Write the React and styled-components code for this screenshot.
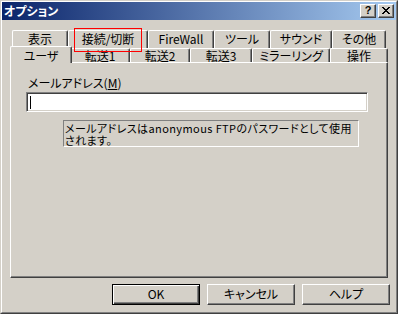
import React from "react";
import styled, { createGlobalStyle, css } from "styled-components";

const FACE = "#d4d0c8";
const SHADOW = "#808080";
const DARK = "#404040";

const Global = createGlobalStyle`
  html, body { margin: 0; padding: 0; background: ${FACE}; }
  body {
    font-family: "Noto Sans CJK JP", "Noto Sans", sans-serif;
    font-size: 12px;
    color: #000;
  }
  * { box-sizing: border-box; }
`;

const Window = styled.div`
  position: relative;
  width: 398px;
  height: 314px;
  background: ${FACE};
  border: 1px solid;
  border-color: ${FACE} ${DARK} ${DARK} ${FACE};
  display: flex;
  flex-direction: column;
  font-feature-settings: "palt" 1;
`;

const Frame = styled.div`
  flex: 1;
  display: flex;
  flex-direction: column;
  border: 1px solid;
  border-color: #fff ${SHADOW} ${SHADOW} #fff;
`;

const TitleBar = styled.div`
  height: 18px;
  flex: none;
  display: flex;
  align-items: center;
  padding: 0 2px 0 2px;
  background: linear-gradient(to right, #0a246a, #a6caf0);
`;

const Title = styled.span`
  flex: 1;
  color: #fff;
  font-weight: bold;
  font-size: 12px;
  line-height: 16px;
`;

const CapButton = styled.div`
  width: 16px;
  height: 14px;
  margin-left: ${(p) => p.$gap || 0}px;
  background: ${FACE};
  border: 1px solid;
  border-color: #fff ${DARK} ${DARK} #fff;
  box-shadow: inset -1px -1px ${SHADOW};
  display: flex;
  align-items: center;
  justify-content: center;
  font-family: "Liberation Sans", sans-serif;
  font-weight: bold;
  font-size: 11px;
  line-height: 11px;
  padding-bottom: 1px;
`;

const Body = styled.div`
  flex: 1;
  display: flex;
  flex-direction: column;
  padding: 10px 6px 0 8px;
`;

const TabStrip = styled.div`
  position: relative;
  z-index: 1;
  display: flex;
  flex-direction: column;
  padding-left: 2px;
`;

const TabRow = styled.div`
  display: flex;
  height: ${(p) => p.$h}px;
`;

const Tab = styled.div`
  position: relative;
  flex: none;
  width: ${(p) => p.$w}px;
  height: 100%;
  background: ${FACE};
  border-top: 1px solid #fff;
  border-left: 1px solid #fff;
  border-right: 1px solid ${DARK};
  box-shadow: inset -1px 0 ${SHADOW};
  border-radius: 2px 2px 0 0;
  text-align: center;
  white-space: nowrap;
  line-height: ${(p) => p.$lh}px;
  ${(p) =>
    p.$active &&
    css`
      margin: -2px -2px 0;
      width: ${p.$w + 4}px;
      height: calc(100% + 3px);
      z-index: 2;
    `}
`;

const Panel = styled.div`
  height: 216px;
  flex: none;
  margin-right: 2px;
  border: 1px solid;
  border-color: #fff ${DARK} ${DARK} #fff;
  box-shadow: inset -1px -1px ${SHADOW};
  padding: 12px 0 0 15px;
  display: flex;
  flex-direction: column;
  align-items: flex-start;
`;

const Label = styled.div`
  margin-left: 2px;
  line-height: 16px;
  white-space: nowrap;
`;

const Key = styled.span`
  text-decoration: underline;
`;

const Field = styled.div`
  width: 342px;
  height: 20px;
  margin-top: 1px;
  background: #fff;
  border: 1px solid;
  border-color: ${SHADOW} #fff #fff ${SHADOW};
  box-shadow: inset 1px 1px ${DARK}, inset -1px -1px ${FACE};
  padding: 2px 0 0 2px;
`;

const Caret = styled.div`
  width: 1px;
  height: 13px;
  margin: 1px 0 0 1px;
  background: #000;
`;

const Note = styled.div`
  width: 296px;
  height: 27px;
  margin: 8px 0 0 37px;
  border: 1px solid;
  border-color: ${SHADOW} #fff #fff ${SHADOW};
  font-size: 11px;
  letter-spacing: 0.4px;
  line-height: 12px;
  padding: 1px 0 0 1px;
  white-space: nowrap;
`;

const NoteLine = styled.div`
  height: 12px;
`;

const ButtonRow = styled.div`
  display: flex;
  justify-content: flex-end;
  gap: 7px;
  margin-top: 6px;
`;

const Button = styled.div`
  width: 88px;
  height: 21px;
  background: ${FACE};
  border: 1px solid;
  border-color: #fff ${DARK} ${DARK} #fff;
  box-shadow: inset -1px -1px ${SHADOW};
  text-align: center;
  line-height: 18px;
  ${(p) =>
    p.$default &&
    css`
      border-color: #000;
      box-shadow: inset 1px 1px #fff, inset -1px -1px ${DARK},
        inset -2px -2px ${SHADOW};
    `}
`;

const Highlight = styled.div`
  position: absolute;
  left: 73px;
  top: 27px;
  width: 68px;
  height: 24px;
  border: 1px solid #ff0000;
  z-index: 5;
  pointer-events: none;
`;

const CloseIcon = () => (
  <svg width="8" height="7" viewBox="0 0 8 7" shapeRendering="crispEdges">
    <path
      d="M0 0h2v1H0zM6 0h2v1H6zM1 1h2v1H1zM5 1h2v1H5zM2 2h4v1H2zM3 3h2v1H3zM2 4h4v1H2zM1 5h2v1H1zM5 5h2v1H5zM0 6h2v1H0zM6 6h2v1H6z"
      fill="#000"
    />
  </svg>
);

const backRow = [
  { label: "表示", w: 56 },
  { label: "接続/切断", w: 80 },
  { label: "FireWall", w: 66 },
  { label: "ツール", w: 56 },
  { label: "サウンド", w: 62 },
  { label: "その他", w: 54 },
];

const frontRow = [
  { label: "ユーザ", w: 58, active: true },
  { label: "転送1", w: 60 },
  { label: "転送2", w: 60 },
  { label: "転送3", w: 62 },
  { label: "ミラーリング", w: 78 },
  { label: "操作", w: 58 },
];

export default function App() {
  return (
    <>
      <Global />
      <Window>
        <Frame>
          <TitleBar>
            <Title>オプション</Title>
            <CapButton>?</CapButton>
            <CapButton $gap={2}>
              <CloseIcon />
            </CapButton>
          </TitleBar>
          <Body>
            <TabStrip>
              <TabRow $h={18}>
                {backRow.map((t) => (
                  <Tab key={t.label} $w={t.w} $lh={15}>
                    {t.label}
                  </Tab>
                ))}
              </TabRow>
              <TabRow $h={14}>
                {frontRow.map((t) => (
                  <Tab key={t.label} $w={t.w} $lh={t.active ? 17 : 13} $active={t.active}>
                    {t.label}
                  </Tab>
                ))}
              </TabRow>
            </TabStrip>
            <Panel>
              <Label>
                メールアドレス(<Key>M</Key>)
              </Label>
              <Field>
                <Caret />
              </Field>
              <Note>
                <NoteLine>メールアドレスはanonymous FTPのパスワードとして使用</NoteLine>
                <NoteLine>されます。</NoteLine>
              </Note>
            </Panel>
            <ButtonRow>
              <Button $default>OK</Button>
              <Button>キャンセル</Button>
              <Button>ヘルプ</Button>
            </ButtonRow>
          </Body>
        </Frame>
        <Highlight />
      </Window>
    </>
  );
}
